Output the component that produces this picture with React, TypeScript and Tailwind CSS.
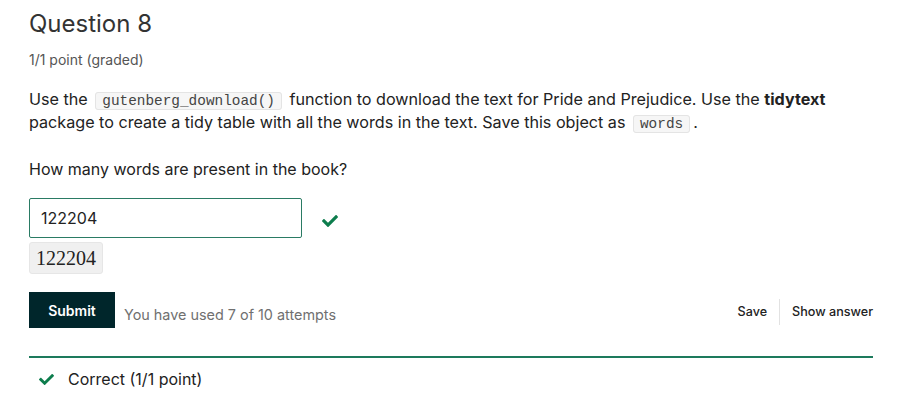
function Check({ className }: { className?: string }) {
  return (
    <svg viewBox="0 0 512 512" className={className} fill="currentColor">
      <path d="M173.898 439.404l-166.4-166.4c-9.997-9.997-9.997-26.206 0-36.204l36.203-36.204c9.997-9.998 26.207-9.998 36.204 0L192 312.69 432.095 72.596c9.997-9.997 26.207-9.997 36.204 0l36.203 36.204c9.997 9.997 9.997 26.206 0 36.204l-294.4 294.401c-9.998 9.997-26.207 9.997-36.204-.001z" />
    </svg>
  );
}

function Code({ children }: { children: React.ReactNode }) {
  return (
    <code className="mx-[3px] rounded-[3px] border border-[#e4e4e4] bg-[#f6f6f6] px-[6px] py-0 font-['Liberation_Mono',monospace] text-[14.4px] leading-[15px] text-[#444]">
      {children}
    </code>
  );
}

export default function App() {
  return (
    <div className="min-h-screen bg-white font-['Inter',sans-serif] text-[#222]">
      <div className="w-[873px] pl-[29px] pt-2">
        <h2 className="text-[24px] leading-8 text-[#333]">Question 8</h2>
        <div className="mt-[12px] text-[14px] leading-4 text-[#555]">1/1 point (graded)</div>

        <p className="mt-[20px] text-[16.15px] leading-[23px]">
          Use the <Code>gutenberg_download()</Code> function to download the text for Pride and Prejudice. Use the{" "}
          <b>tidytext</b> package to create a tidy table with all the words in the text. Save this object as{" "}
          <Code>words</Code>.
        </p>

        <p className="mt-[24px] text-[16px] leading-[23px]">How many words are present in the book?</p>

        <div className="mt-[17px] flex items-center">
          <div className="flex h-10 w-[273px] items-center rounded-[2px] border border-[#2a7b64] px-[11px] text-[16px]">
            122204
          </div>
          <Check className="ml-[20px] mt-[6px] h-4 w-4 text-[#0d7d4d]" />
        </div>
        <div className="mt-1 w-fit rounded-[3px] border border-[#e6e6e6] bg-[#f0f0f0] px-[6px] py-[2px] font-['Liberation_Serif',serif] text-[20px] leading-[26px] text-[#222]">
          122204
        </div>

        <div className="mt-[18px] flex items-center">
          <button className="h-9 w-[86px] bg-[#00262b] text-[14px] font-semibold text-white">Submit</button>
          <span className="ml-[9px] mt-[10px] text-[14.4px] text-[#707070]">You have used 7 of 10 attempts</span>
          <div className="ml-auto mt-[4px] flex items-center text-[12.6px] font-medium text-[#222]">
            <span>Save</span>
            <span className="mx-3 h-[26px] w-px bg-[#e2e2e2]" />
            <span>Show answer</span>
          </div>
        </div>

        <div className="mt-[28px] h-[2px] bg-[#1d7a5c]" />

        <div className="mt-[9px] flex items-center text-[16px] leading-6">
          <Check className="ml-[10px] h-[15px] w-[15px] text-[#0d7d4d]" />
          <span className="ml-[14px]">Correct (1/1 point)</span>
        </div>
      </div>
    </div>
  );
}
